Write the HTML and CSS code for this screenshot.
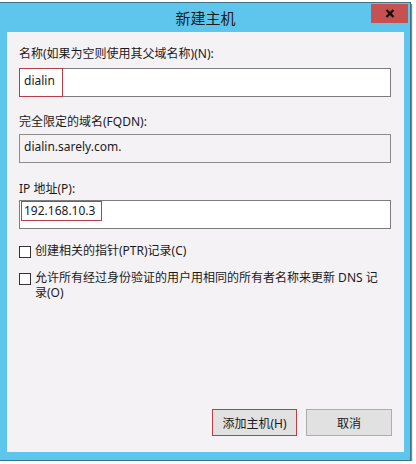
FILE: index.html
```html
<!DOCTYPE html>
<html>

<head>
    <meta charset="utf-8">
    <meta name="viewport" content="width=device-width, initial-scale=1">
    <title>新建主机</title>
    <link rel="stylesheet" href="styles.css">
</head>

<body>
    <div class="window">
        <div class="titlebar">
            <span class="title">新建主机</span>
            <div class="close">
                <svg width="10" height="9" viewBox="0 0 10 9">
                    <path d="M1.5 1 L8.5 8 M8.5 1 L1.5 8" stroke="#111" stroke-width="2.4" fill="none" />
                </svg>
            </div>
        </div>
        <div class="client">
            <label class="caption first">名称(如果为空则使用其父域名称)(N):</label>
            <div class="field">
                <span class="mark name">dialin</span>
            </div>

            <label class="caption fqdn-caption">完全限定的域名(FQDN):</label>
            <div class="field readonly">
                <span class="value">dialin.sarely.com.</span>
            </div>

            <label class="caption ip-caption">IP 地址(P):</label>
            <div class="field">
                <span class="mark ip">192.168.10.3</span>
            </div>

            <div class="check ptr">
                <span class="box"></span>
                <span class="check-text">创建相关的指针(PTR)记录(C)</span>
            </div>
            <div class="check owner">
                <span class="box"></span>
                <span class="check-text">允许所有经过身份验证的用户用相同的所有者名称来更新 DNS 记录(O)</span>
            </div>

            <div class="buttons">
                <button class="btn default">添加主机(H)</button>
                <button class="btn cancel">取消</button>
            </div>
        </div>
    </div>
</body>

</html>
```

FILE: styles.css
```css
body {
    margin: 0;
    padding-top: 2px;
    background: #fff;
    font-family: 'Noto Sans', 'Noto Sans CJK SC', sans-serif;
    font-size: 12px;
    color: #1a1a1a;
}

.window {
    width: 397px;
    padding: 0 6px 8px 7px;
    background: #5ec6ec;
    border-top: 1px solid #3f7386;
    border-right: 1px solid #3f7386;
    border-bottom: 1px solid #3f7386;
    box-shadow: 1px 2px 1px rgba(30, 30, 30, 0.55);
}

.titlebar {
    position: relative;
    height: 29px;
    display: flex;
    align-items: center;
    justify-content: center;
}

.title {
    font-size: 15px;
    color: #1b1b1b;
}

.close {
    position: absolute;
    top: 1px;
    right: -4px;
    width: 37px;
    height: 19px;
    background: #c75050;
    display: flex;
    align-items: center;
    justify-content: center;
}

.client {
    height: 420px;
    box-sizing: border-box;
    padding: 14px 13px 16px 12px;
    background: #f5f2f5;
    display: flex;
    flex-direction: column;
}

.caption {
    line-height: 16px;
    margin-bottom: 6px;
}

.fqdn-caption {
    margin-top: 17px;
    margin-bottom: 4px;
}

.ip-caption {
    margin-top: 18px;
    margin-bottom: 3px;
}

.field {
    height: 29px;
    box-sizing: border-box;
    border: 1px solid #7d7d7d;
    background: #fff;
    display: flex;
    align-items: flex-start;
    line-height: 16px;
}

.field.readonly {
    background: #f5f2f5;
    border-color: #8c8c8c;
}

.value {
    padding: 4px 4px 0;
}

.mark {
    box-sizing: border-box;
    border: 1px solid #b5404a;
}

.mark.name {
    align-self: stretch;
    margin: -1px 0 -1px -1px;
    padding: 4px 7px 0 4px;
}

.mark.ip {
    height: 20px;
    margin-left: 1px;
    padding: 1px 6px 0 2px;
}

.check {
    display: flex;
    align-items: flex-start;
    gap: 4px;
    line-height: 15px;
}

.check.ptr {
    margin-top: 14px;
}

.check.owner {
    margin-top: 12px;
}

.check .box {
    width: 12px;
    height: 12px;
    box-sizing: border-box;
    flex-shrink: 0;
    margin-top: 3px;
    border: 1px solid #333;
    background: #fff;
}

.owner .check-text {
    width: 348px;
}

.buttons {
    margin-top: auto;
    margin-right: -1px;
    display: flex;
    justify-content: flex-end;
    gap: 9px;
}

.btn {
    width: 85px;
    height: 27px;
    padding: 0;
    border: 1px solid #adadad;
    background: #e1e1e1;
    font-family: inherit;
    font-size: 12px;
    color: #1a1a1a;
}

.btn.cancel {
    width: 86px;
}

.btn.default {
    border-color: #b5404a;
}
```
